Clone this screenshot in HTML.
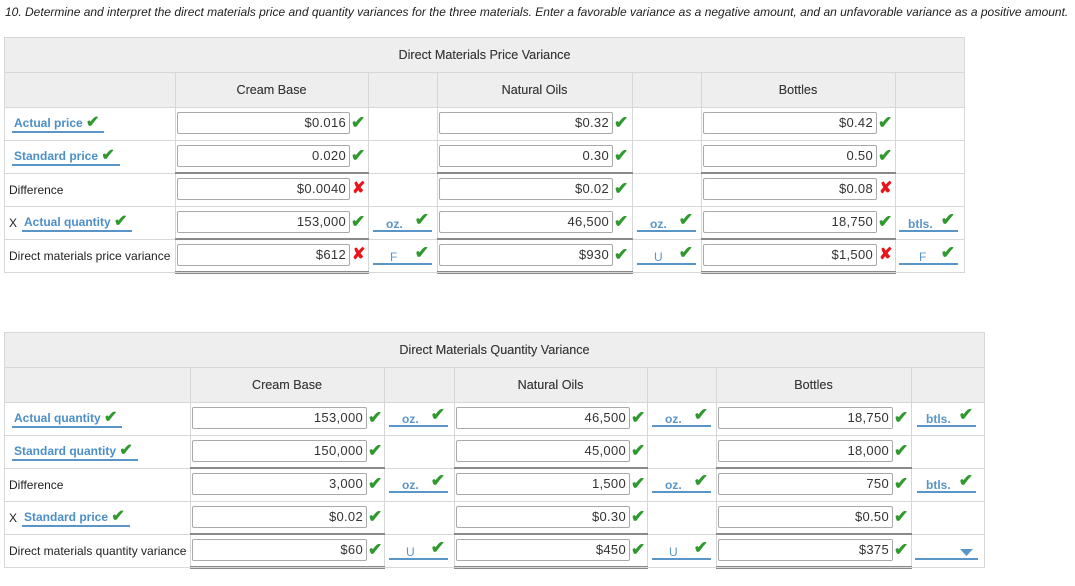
<!DOCTYPE html>
<html><head><meta charset="utf-8">
<style>
*{margin:0;padding:0;box-sizing:border-box}
body{width:1075px;height:586px;background:#fff;position:relative;overflow:hidden;font-family:"Liberation Sans",Arial,sans-serif;font-size:12px;color:#222}
.a{position:absolute}
.hd{position:absolute;background:#eeeeee}
.hl{position:absolute;height:1px;background:#d5d8da}
.vl{position:absolute;width:1px;background:#d5d8da}
.th{position:absolute;font-size:12.6px;color:#3a3a3a;text-align:center;line-height:14px;text-shadow:0 0 0.3px #3a3a3a}
.in{position:absolute;height:22px;border:1px solid #a9a9a9;border-radius:2px;background:#fff;text-align:right;padding-right:3px;font-size:13px;line-height:20px;color:#333;letter-spacing:0.3px}
.ck{position:absolute;color:#2e9a2e;font-size:17px;font-weight:bold;line-height:16px}
.xx{position:absolute;color:#e8161b;font-size:16px;font-weight:bold;line-height:16px}
.lk{position:absolute;color:#4b8fca;font-weight:bold;font-size:12px;border-bottom:2px solid #5a95c8;padding:0 5px 1px 2px;line-height:14px;white-space:nowrap}
.lk b{color:#2e9a2e;font-size:16px}
.pl{position:absolute;font-size:12px;color:#222;line-height:14px;white-space:nowrap}
.un{position:absolute;width:59px;height:16px;border-bottom:2px solid #5a95c8;color:#5a95c8;font-weight:bold;font-size:12px;line-height:14px}
.un span{position:absolute;top:1px}
.un b{position:absolute;right:3px;top:-3px;color:#2e9a2e;font-size:17px}
.tk{position:absolute;height:3px;border-top:2px solid #8a8a8a}
.db{position:absolute;height:3px;border-top:1px solid #8a8a8a;border-bottom:1px solid #8a8a8a}
</style></head><body>
<div class="a" style="left:5px;top:5px;font-style:italic;font-size:12px;color:#222;white-space:nowrap">10. Determine and interpret the direct materials price and quantity variances for the three materials. Enter a favorable variance as a negative amount, and an unfavorable variance as a positive amount.</div>

<!-- TABLE 1 -->
<div class="hd" style="left:4px;top:37px;width:961px;height:70px"></div>
<div class="hl" style="left:4px;top:37px;width:961px"></div>
<div class="hl" style="left:4px;top:72px;width:961px"></div>
<div class="hl" style="left:4px;top:107px;width:961px"></div>
<div class="hl" style="left:4px;top:140px;width:961px"></div>
<div class="hl" style="left:4px;top:173px;width:961px"></div>
<div class="hl" style="left:4px;top:206px;width:961px"></div>
<div class="hl" style="left:4px;top:239px;width:961px"></div>
<div class="hl" style="left:4px;top:272px;width:961px"></div>
<div class="vl" style="left:4px;top:37px;height:236px"></div>
<div class="vl" style="left:964px;top:37px;height:236px"></div>
<div class="vl" style="left:175px;top:72px;height:200px"></div>
<div class="vl" style="left:368px;top:72px;height:200px"></div>
<div class="vl" style="left:437px;top:72px;height:200px"></div>
<div class="vl" style="left:632px;top:72px;height:200px"></div>
<div class="vl" style="left:701px;top:72px;height:200px"></div>
<div class="vl" style="left:895px;top:72px;height:200px"></div>
<div class="th" style="left:4px;width:961px;top:48px">Direct Materials Price Variance</div>
<div class="th" style="left:175px;width:193px;top:83px">Cream Base</div>
<div class="th" style="left:437px;width:195px;top:83px">Natural Oils</div>
<div class="th" style="left:701px;width:194px;top:83px">Bottles</div>

<div class="lk" style="left:12px;top:116px">Actual price <b>✔</b></div>
<div class="lk" style="left:12px;top:149px">Standard price <b>✔</b></div>
<div class="pl" style="left:9px;top:183px">Difference</div>
<div class="pl" style="left:9px;top:216px">X</div>
<div class="lk" style="left:22px;top:215px">Actual quantity <b>✔</b></div>
<div class="pl" style="left:9px;top:249px">Direct materials price variance</div>

<div class="tk" style="left:175px;top:172px;width:194px"></div>
<div class="tk" style="left:437px;top:172px;width:196px"></div>
<div class="tk" style="left:701px;top:172px;width:195px"></div>
<div class="tk" style="left:175px;top:238px;width:194px"></div>
<div class="tk" style="left:437px;top:238px;width:196px"></div>
<div class="tk" style="left:701px;top:238px;width:195px"></div>
<div class="db" style="left:175px;top:271px;width:194px"></div>
<div class="db" style="left:437px;top:271px;width:196px"></div>
<div class="db" style="left:701px;top:271px;width:195px"></div>

<div class="in" style="left:177px;top:112px;width:173px">$0.016</div><div class="ck" style="left:351px;top:115px">✔</div>
<div class="in" style="left:177px;top:145px;width:173px">0.020</div><div class="ck" style="left:351px;top:148px">✔</div>
<div class="in" style="left:177px;top:178px;width:173px">$0.0040</div><div class="xx" style="left:352px;top:181px">✘</div>
<div class="in" style="left:177px;top:211px;width:173px">153,000</div><div class="ck" style="left:351px;top:214px">✔</div>
<div class="in" style="left:177px;top:244px;width:173px">$612</div><div class="xx" style="left:352px;top:247px">✘</div>
<div class="un" style="left:373px;top:216px"><span style="left:13px">oz.</span><b>✔</b></div>
<div class="un" style="left:373px;top:249px"><span style="left:17px;font-weight:normal">F</span><b>✔</b></div>

<div class="in" style="left:439px;top:112px;width:174px">$0.32</div><div class="ck" style="left:614px;top:115px">✔</div>
<div class="in" style="left:439px;top:145px;width:174px">0.30</div><div class="ck" style="left:614px;top:148px">✔</div>
<div class="in" style="left:439px;top:178px;width:174px">$0.02</div><div class="ck" style="left:614px;top:181px">✔</div>
<div class="in" style="left:439px;top:211px;width:174px">46,500</div><div class="ck" style="left:614px;top:214px">✔</div>
<div class="in" style="left:439px;top:244px;width:174px">$930</div><div class="ck" style="left:614px;top:247px">✔</div>
<div class="un" style="left:637px;top:216px"><span style="left:13px">oz.</span><b>✔</b></div>
<div class="un" style="left:637px;top:249px"><span style="left:17px;font-weight:normal">U</span><b>✔</b></div>

<div class="in" style="left:703px;top:112px;width:174px">$0.42</div><div class="ck" style="left:878px;top:115px">✔</div>
<div class="in" style="left:703px;top:145px;width:174px">0.50</div><div class="ck" style="left:878px;top:148px">✔</div>
<div class="in" style="left:703px;top:178px;width:174px">$0.08</div><div class="xx" style="left:879px;top:181px">✘</div>
<div class="in" style="left:703px;top:211px;width:174px">18,750</div><div class="ck" style="left:878px;top:214px">✔</div>
<div class="in" style="left:703px;top:244px;width:174px">$1,500</div><div class="xx" style="left:879px;top:247px">✘</div>
<div class="un" style="left:899px;top:216px"><span style="left:9px">btls.</span><b>✔</b></div>
<div class="un" style="left:899px;top:249px"><span style="left:20px;font-weight:normal">F</span><b>✔</b></div>

<!-- TABLE 2 -->
<div class="hd" style="left:4px;top:332px;width:981px;height:70px"></div>
<div class="hl" style="left:4px;top:332px;width:981px"></div>
<div class="hl" style="left:4px;top:367px;width:981px"></div>
<div class="hl" style="left:4px;top:402px;width:981px"></div>
<div class="hl" style="left:4px;top:435px;width:981px"></div>
<div class="hl" style="left:4px;top:468px;width:981px"></div>
<div class="hl" style="left:4px;top:501px;width:981px"></div>
<div class="hl" style="left:4px;top:534px;width:981px"></div>
<div class="hl" style="left:4px;top:567px;width:981px"></div>
<div class="vl" style="left:4px;top:332px;height:236px"></div>
<div class="vl" style="left:984px;top:332px;height:236px"></div>
<div class="vl" style="left:190px;top:367px;height:200px"></div>
<div class="vl" style="left:384px;top:367px;height:200px"></div>
<div class="vl" style="left:454px;top:367px;height:200px"></div>
<div class="vl" style="left:647px;top:367px;height:200px"></div>
<div class="vl" style="left:716px;top:367px;height:200px"></div>
<div class="vl" style="left:911px;top:367px;height:200px"></div>
<div class="th" style="left:4px;width:981px;top:343px">Direct Materials Quantity Variance</div>
<div class="th" style="left:190px;width:194px;top:378px">Cream Base</div>
<div class="th" style="left:454px;width:193px;top:378px">Natural Oils</div>
<div class="th" style="left:716px;width:195px;top:378px">Bottles</div>

<div class="lk" style="left:12px;top:411px">Actual quantity <b>✔</b></div>
<div class="lk" style="left:12px;top:444px">Standard quantity <b>✔</b></div>
<div class="pl" style="left:9px;top:478px">Difference</div>
<div class="pl" style="left:9px;top:511px">X</div>
<div class="lk" style="left:22px;top:510px">Standard price <b>✔</b></div>
<div class="pl" style="left:9px;top:544px">Direct materials quantity variance</div>

<div class="tk" style="left:190px;top:467px;width:195px"></div>
<div class="tk" style="left:454px;top:467px;width:194px"></div>
<div class="tk" style="left:716px;top:467px;width:196px"></div>
<div class="tk" style="left:190px;top:533px;width:195px"></div>
<div class="tk" style="left:454px;top:533px;width:194px"></div>
<div class="tk" style="left:716px;top:533px;width:196px"></div>
<div class="db" style="left:190px;top:566px;width:195px"></div>
<div class="db" style="left:454px;top:566px;width:194px"></div>
<div class="db" style="left:716px;top:566px;width:196px"></div>

<div class="in" style="left:192px;top:407px;width:175px">153,000</div><div class="ck" style="left:368px;top:410px">✔</div>
<div class="in" style="left:192px;top:440px;width:175px">150,000</div><div class="ck" style="left:368px;top:443px">✔</div>
<div class="in" style="left:192px;top:473px;width:175px">3,000</div><div class="ck" style="left:368px;top:476px">✔</div>
<div class="in" style="left:192px;top:506px;width:175px">$0.02</div><div class="ck" style="left:368px;top:509px">✔</div>
<div class="in" style="left:192px;top:539px;width:175px">$60</div><div class="ck" style="left:368px;top:542px">✔</div>
<div class="un" style="left:389px;top:411px"><span style="left:13px">oz.</span><b>✔</b></div>
<div class="un" style="left:389px;top:477px"><span style="left:13px">oz.</span><b>✔</b></div>
<div class="un" style="left:389px;top:544px"><span style="left:17px;font-weight:normal">U</span><b>✔</b></div>

<div class="in" style="left:456px;top:407px;width:174px">46,500</div><div class="ck" style="left:631px;top:410px">✔</div>
<div class="in" style="left:456px;top:440px;width:174px">45,000</div><div class="ck" style="left:631px;top:443px">✔</div>
<div class="in" style="left:456px;top:473px;width:174px">1,500</div><div class="ck" style="left:631px;top:476px">✔</div>
<div class="in" style="left:456px;top:506px;width:174px">$0.30</div><div class="ck" style="left:631px;top:509px">✔</div>
<div class="in" style="left:456px;top:539px;width:174px">$450</div><div class="ck" style="left:631px;top:542px">✔</div>
<div class="un" style="left:652px;top:411px"><span style="left:13px">oz.</span><b>✔</b></div>
<div class="un" style="left:652px;top:477px"><span style="left:13px">oz.</span><b>✔</b></div>
<div class="un" style="left:652px;top:544px"><span style="left:17px;font-weight:normal">U</span><b>✔</b></div>

<div class="in" style="left:718px;top:407px;width:175px">18,750</div><div class="ck" style="left:894px;top:410px">✔</div>
<div class="in" style="left:718px;top:440px;width:175px">18,000</div><div class="ck" style="left:894px;top:443px">✔</div>
<div class="in" style="left:718px;top:473px;width:175px">750</div><div class="ck" style="left:894px;top:476px">✔</div>
<div class="in" style="left:718px;top:506px;width:175px">$0.50</div><div class="ck" style="left:894px;top:509px">✔</div>
<div class="in" style="left:718px;top:539px;width:175px">$375</div><div class="ck" style="left:894px;top:542px">✔</div>
<div class="un" style="left:917px;top:411px"><span style="left:9px">btls.</span><b>✔</b></div>
<div class="un" style="left:917px;top:477px"><span style="left:9px">btls.</span><b>✔</b></div>
<div class="un" style="left:915px;top:544px;width:63px"><svg style="position:absolute;right:5px;top:5px" width="13" height="7"><polygon points="0,0 13,0 6.5,7" fill="#5a95c8"/></svg></div>
</body></html>
